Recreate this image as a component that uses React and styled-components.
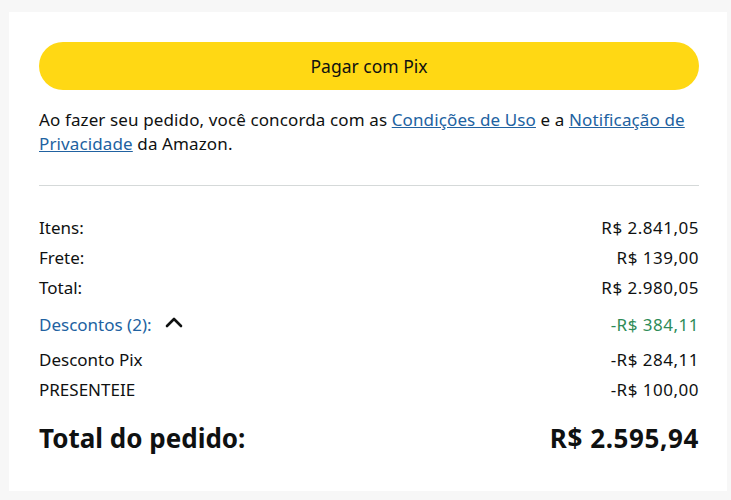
import React from 'react';
import styled, { createGlobalStyle } from 'styled-components';

const GlobalStyle = createGlobalStyle`
  html, body {
    margin: 0;
    padding: 0;
    background: #f7f7f7;
  }
  body {
    font-family: "Noto Sans", "Liberation Sans", sans-serif;
    color: #0f1111;
  }
`;

const Page = styled.div`
  padding: 12px 4px 9px 9px;
`;

const Card = styled.div`
  background: #fff;
  padding: 30px 28px 30px 30px;
  height: 479px;
  box-sizing: border-box;
`;

const PayButton = styled.button`
  display: flex;
  align-items: center;
  justify-content: center;
  width: 100%;
  height: 48px;
  border: none;
  border-radius: 24px;
  background: #ffd814;
  font-family: inherit;
  font-size: 17.5px;
  color: #0f1111;
  cursor: pointer;
`;

const Legal = styled.p`
  margin: 18px 0 0;
  font-size: 17px;
  line-height: 24px;
  letter-spacing: 0.12px;
`;

const Link = styled.a`
  color: #2162a1;
  text-decoration: underline;
`;

const Divider = styled.hr`
  margin: 29px 0 26px;
  border: none;
  border-top: 1px solid #d5d9d9;
`;

const Row = styled.div`
  display: flex;
  justify-content: space-between;
  align-items: center;
  height: 30px;
  font-size: 17px;
  margin-top: ${p => p.$gap || 0}px;
`;

const Label = styled.span`
  display: flex;
  align-items: center;
  gap: 12px;
  color: ${p => p.$color || 'inherit'};
`;

const Value = styled.span`
  letter-spacing: 0.5px;
  color: ${p => p.$color || 'inherit'};
`;

const GrandTotal = styled.div`
  display: flex;
  justify-content: space-between;
  align-items: center;
  margin-top: 16px;
  height: 36px;
  font-size: 26px;
  font-weight: 700;
`;

const GrandValue = styled.span`
  letter-spacing: 0.6px;
`;

const Caret = () => (
  <svg width="20" height="14" viewBox="0 0 20 14" fill="none" style={{ marginTop: -4 }}>
    <polyline points="3,11 10,4 17,11" stroke="#0f1111" strokeWidth="2.6" strokeLinecap="round" strokeLinejoin="round" />
  </svg>
);

const lines = [
  { label: 'Itens:', value: 'R$ 2.841,05' },
  { label: 'Frete:', value: 'R$ 139,00' },
  { label: 'Total:', value: 'R$ 2.980,05' },
];

const discounts = [
  { label: 'Desconto Pix', value: '-R$ 284,11', gap: 5 },
  { label: 'PRESENTEIE', value: '-R$ 100,00' },
];

export default function App() {
  return (
    <>
      <GlobalStyle />
      <Page>
        <Card>
          <PayButton>Pagar com Pix</PayButton>
          <Legal>
            Ao fazer seu pedido, você concorda com as <Link href="#">Condições de Uso</Link> e a{' '}
            <Link href="#">Notificação de Privacidade</Link> da Amazon.
          </Legal>
          <Divider />
          {lines.map(l => (
            <Row key={l.label}>
              <Label>{l.label}</Label>
              <Value>{l.value}</Value>
            </Row>
          ))}
          <Row $gap={7}>
            <Label $color="#2162a1">Descontos (2): <Caret /></Label>
            <Value $color="#2e8b57">-R$ 384,11</Value>
          </Row>
          {discounts.map(d => (
            <Row key={d.label} $gap={d.gap}>
              <Label>{d.label}</Label>
              <Value>{d.value}</Value>
            </Row>
          ))}
          <GrandTotal>
            <span>Total do pedido:</span>
            <GrandValue>R$ 2.595,94</GrandValue>
          </GrandTotal>
        </Card>
      </Page>
    </>
  );
}
